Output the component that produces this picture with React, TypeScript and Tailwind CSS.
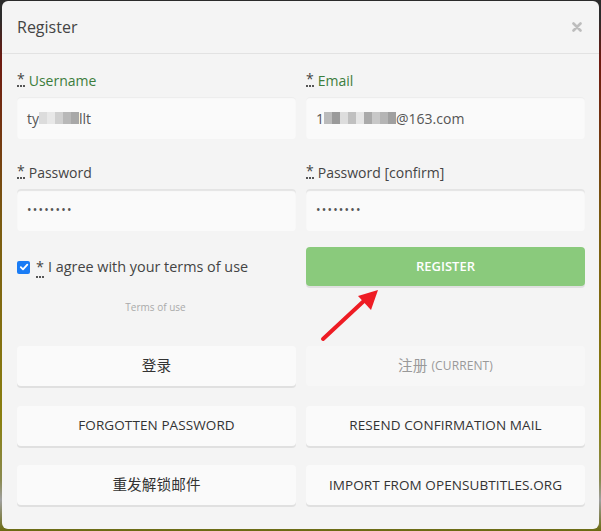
import React from 'react';

const font = "font-['Open_Sans','Noto_Sans_CJK_SC',sans-serif]";

function Star() {
  return <abbr className="no-underline border-b-2 border-dotted border-[#555] leading-[12px] mr-1 text-[#444]" title="required">*</abbr>;
}

function Mosaic({ cells }: { cells: string[] }) {
  return (
    <span className="inline-flex items-center h-[14px] align-middle">
      {cells.map((c, i) => (
        <span key={i} className="inline-block w-[8px] h-[12px]" style={{ background: c }} />
      ))}
    </span>
  );
}

function Field({ label, green, children, shaded }: { label: string; green?: boolean; children: React.ReactNode; shaded?: boolean }) {
  return (
    <div className="flex flex-col">
      <label className={`h-[20px] flex items-center text-[14px] ${green ? 'text-[#3c7d3c]' : 'text-[#444]'}`}>
        <Star />
        {label}
      </label>
      <div
        className={`mt-[7px] h-[42px] rounded-[4px] bg-[#fafafa] flex items-center px-[10px] text-[14px] text-[#555] ${
          shaded ? 'shadow-[inset_0_2px_1px_#e4e4e4]' : 'shadow-[inset_0_1px_1px_#ececec]'
        }`}
      >
        {children}
      </div>
    </div>
  );
}

function Btn({ children, disabled, cjk }: { children: React.ReactNode; disabled?: boolean; cjk?: boolean }) {
  return (
    <button
      className={`h-[40px] rounded-[4px] flex items-center justify-center tracking-[0.1px] ${cjk ? 'text-[14.6px]' : 'text-[13.5px]'} ${
        disabled ? 'bg-[#f7f7f7] text-[#999]' : 'bg-[#fafafa] text-[#333] shadow-[0_2px_0_#e0e0e0]'
      }`}
    >
      {children}
    </button>
  );
}

export default function App() {
  return (
    <div className={`w-[601px] h-[531px] overflow-hidden bg-[linear-gradient(180deg,#2b2b2b_0px,#2b2b2b_18px,#6e1a10_60px,#7a5a10_220px,#8a8010_420px,#8a8a50_480px,#a0a0a0_500px,#6a6a10_531px)] pt-[1px] pl-[2px] ${font}`}>
      <div className="relative w-[597px] h-[528px] rounded-[6px] bg-[#f4f4f4] flex flex-col">
        {/* header */}
        <div className="shrink-0 h-[53px] border-b border-[#e2e2e2] flex items-center justify-between pl-[15px] pr-[17px]">
          <h4 className="text-[16px] text-[#444] leading-none -mt-[1px]">Register</h4>
          <svg width="10" height="10" viewBox="0 0 10 10" className="-mt-[1px]">
            <path d="M1.5 1.5 L8.5 8.5 M8.5 1.5 L1.5 8.5" stroke="#bdbdbd" strokeWidth="2.6" strokeLinecap="round" />
          </svg>
        </div>

        {/* body */}
        <div className="pl-[15px] pr-[14px] pt-[16px]">
          <div className="grid grid-cols-2 gap-x-[10px] gap-y-[23px]">
            <Field label="Username" green>
              ty
              <Mosaic cells={['#dcdcdc', '#e8e8e8', '#d0d0d0', '#b8b8b8', '#a8a8a8']} />
              llt
            </Field>
            <Field label="Email" green>
              1
              <Mosaic cells={['#bbbbbb', '#9a9a9a', '#dddddd', '#c0c0c0', '#e5e5e5', '#aaaaaa', '#c8c8c8', '#b5b5b5', '#a0a0a0']} />
              @163.com
            </Field>
            <Field label="Password" shaded>
              <span className="text-[12px] tracking-[1.2px] text-[#555]">••••••••</span>
            </Field>
            <Field label="Password [confirm]" shaded>
              <span className="text-[12px] tracking-[1.2px] text-[#555]">••••••••</span>
            </Field>
          </div>

          <div className="grid grid-cols-2 gap-x-[10px] mt-[16px]">
            <div className="flex flex-col">
              <div className="h-[40px] flex items-center">
                <span className="w-[13px] h-[13px] rounded-[2px] bg-[#1a7cf5] flex items-center justify-center mr-[6px]">
                  <svg width="10" height="10" viewBox="0 0 10 10">
                    <path d="M1.8 5.2 L4 7.4 L8.3 2.6" stroke="white" strokeWidth="1.8" fill="none" strokeLinecap="round" strokeLinejoin="round" />
                  </svg>
                </span>
                <span className="text-[14.4px] text-[#444]">
                  <Star />I agree with your terms of use
                </span>
              </div>
              <div className="text-center text-[10px] text-[#aaa] mt-[13px] mr-[2px]">Terms of use</div>
            </div>
            <div>
              <button className="w-full h-[39px] rounded-[4px] bg-[#8aca7c] text-white text-[13px] font-semibold shadow-[0_2px_0_#e0e0e0]">
                REGISTER
              </button>
            </div>
          </div>

          <div className="grid grid-cols-2 gap-x-[10px] gap-y-[19.5px] mt-[31px]">
            <Btn cjk>登录</Btn>
            <Btn disabled>
              <span className="text-[14.6px]">注册</span> <span className="text-[12px] ml-[4px]">(CURRENT)</span>
            </Btn>
            <Btn>FORGOTTEN PASSWORD</Btn>
            <Btn>RESEND CONFIRMATION MAIL</Btn>
            <Btn cjk>重发解锁邮件</Btn>
            <Btn>IMPORT FROM OPENSUBTITLES.ORG</Btn>
          </div>
        </div>

        {/* annotation arrow */}
        <svg className="absolute left-[312px] top-[283px]" width="72" height="62" viewBox="0 0 72 62">
          <path d="M9 55 L52 15" stroke="#ee1c24" strokeWidth="4" strokeLinecap="round" />
          <path d="M64 6 L44 12 L57 26 Z" fill="#ee1c24" />
        </svg>
      </div>
    </div>
  );
}
